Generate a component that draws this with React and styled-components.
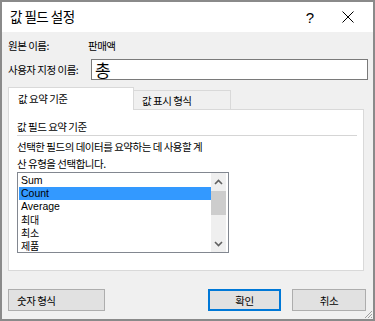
import React from 'react'
import styled, { createGlobalStyle, css } from 'styled-components'

const GlobalStyle = createGlobalStyle`
  * { box-sizing: border-box; }
  body {
    margin: 0;
    background: #fff;
    font-family: "Noto Sans CJK KR", "Noto Sans", sans-serif;
    color: #000;
  }
`

const items = ['Sum', 'Count', 'Average', '최대', '최소', '제품']

export default function App() {
  return <Window>
    <GlobalStyle/>
    <TitleBar>
      <Title>값 필드 설정</Title>
      <TitleButton>?</TitleButton>
      <TitleButton close>
        <svg width="12" height="12" viewBox="0 0 12 12">
          <path d="M0.5 0.5 L11.5 11.5 M11.5 0.5 L0.5 11.5" stroke="#000" strokeWidth="1"/>
        </svg>
      </TitleButton>
    </TitleBar>
    <Body>
      <FieldRow>
        <Label width={80}>원본 이름:</Label>
        <Value>판매액</Value>
      </FieldRow>
      <FieldRow top={5}>
        <Label width={83}>사용자 지정 이름:</Label>
        <TextInput defaultValue="총"/>
      </FieldRow>
      <TabStrip>
        <Tab active>값 요약 기준</Tab>
        <Tab>값 표시 형식</Tab>
      </TabStrip>
      <Panel>
        <Heading>값 필드 요약 기준</Heading>
        <Separator/>
        <Description>선택한 필드의 데이터를 요약하는 데 사용할 계<br/>산 유형을 선택합니다.</Description>
        <ListBox>
          <ListItems>
            {items.map((item, i) => (
              <ListItem key={item} selected={i === 1} latin={/^[A-Za-z]/.test(item)}>{item}</ListItem>
            ))}
          </ListItems>
          <ScrollBar>
            <ScrollArrow>
              <svg width="9" height="6" viewBox="0 0 9 6">
                <path d="M1 5 L4.5 1.5 L8 5" stroke="#606060" strokeWidth="1.6" fill="none"/>
              </svg>
            </ScrollArrow>
            <Thumb/>
            <ScrollTrack/>
            <ScrollArrow>
              <svg width="9" height="6" viewBox="0 0 9 6">
                <path d="M1 1 L4.5 4.5 L8 1" stroke="#606060" strokeWidth="1.6" fill="none"/>
              </svg>
            </ScrollArrow>
          </ScrollBar>
        </ListBox>
      </Panel>
      <ButtonRow>
        <Button width={97} left>숫자 형식</Button>
        <Spacer/>
        <Button width={73} primary>확인</Button>
        <Button width={74}>취소</Button>
      </ButtonRow>
    </Body>
    <Grip>
      <svg width="10" height="10" viewBox="0 0 10 10">
        <path d="M9 2 L2 9 M9 5 L5 9 M9 8 L8 9" stroke="#a0a0a0" strokeWidth="1"/>
      </svg>
    </Grip>
  </Window>
}

const Window = styled.div`
  position: relative;
  width: 375px;
  height: 321px;
  border: 2px solid #8a8a8a;
  background: #f0f0f0;
  display: flex;
  flex-direction: column;
  overflow: hidden;
`
const TitleBar = styled.div`
  height: 30px;
  background: #fff;
  display: flex;
  align-items: center;
  padding-left: 8px;
`
const Title = styled.div`
  flex: 1;
  font-size: 13.5px;
  letter-spacing: -0.5px;
  padding-bottom: 2px;
`
const TitleButton = styled.div`
  width: ${({ close }) => close ? '44px' : '38px'};
  height: 30px;
  display: flex;
  align-items: center;
  justify-content: center;
  font-family: "Liberation Sans", sans-serif;
  font-size: 15px;
  ${({ close }) => close && css`padding-right: 6px;`}
`
const Body = styled.div`
  flex: 1;
  padding: 4px 5px 0 6px;
  display: flex;
  flex-direction: column;
  font-size: 10.5px;
  letter-spacing: -0.5px;
`
const FieldRow = styled.div`
  display: flex;
  align-items: center;
  height: ${({ top }) => top ? '21px' : '18px'};
  margin-top: ${({ top }) => top || 0}px;
`
const Label = styled.div`
  width: ${({ width }) => width}px;
  flex-shrink: 0;
  white-space: nowrap;
`
const Value = styled.div``
const TextInput = styled.input`
  flex: 1;
  height: 21px;
  border: 1px solid #7a7a7a;
  background: #fff;
  font-family: "Noto Sans CJK KR", sans-serif;
  font-size: 17px;
  padding: 0 3px;
  margin: 0;
  outline: none;
  line-height: 19px;
`
const TabStrip = styled.div`
  display: flex;
  align-items: flex-end;
  height: 22px;
  margin-top: 7px;
  position: relative;
  z-index: 1;
`
const Tab = styled.div`
  display: flex;
  align-items: center;
  border: 1px solid #d9d9d9;
  border-bottom: none;
  white-space: nowrap;
  ${({ active }) => active ? css`
    width: 126px;
    height: 23px;
    margin-bottom: -1px;
    background: #fff;
    padding: 0 0 1px 9px;
  ` : css`
    width: 97px;
    height: 19px;
    background: #f0f0f0;
    border-left: none;
    padding-left: 8px;
  `}
`
const Panel = styled.div`
  width: 356px;
  height: 162px;
  background: #fff;
  border: 1px solid #d9d9d9;
  padding: 8px 6px 0 8px;
  display: flex;
  flex-direction: column;
`
const Heading = styled.div`
  line-height: 17px;
`
const Separator = styled.div`
  height: 1px;
  background: #d5d5d5;
`
const Description = styled.div`
  margin-top: 2px;
  line-height: 17px;
`
const ListBox = styled.div`
  width: 212px;
  height: 81px;
  border: 1px solid #828790;
  display: flex;
  padding: 1px 2px 0 1px;
`
const ListItems = styled.div`
  flex: 1;
  display: flex;
  flex-direction: column;
`
const ListItem = styled.div`
  height: 13px;
  line-height: 13px;
  padding-left: 2px;
  overflow: hidden;
  font-size: ${({ latin }) => latin ? '10.5px' : '10px'};
  font-family: ${({ latin }) => latin ? '"Liberation Sans", sans-serif' : '"Noto Sans CJK KR", sans-serif'};
  letter-spacing: ${({ latin }) => latin ? '0' : '-0.3px'};
  background: ${({ selected }) => selected ? '#3399ff' : 'transparent'};
`
const ScrollBar = styled.div`
  width: 15px;
  margin-top: -1px;
  background: #efefef;
  display: flex;
  flex-direction: column;
`
const ScrollArrow = styled.div`
  height: 17px;
  display: flex;
  align-items: center;
  justify-content: center;
`
const Thumb = styled.div`
  height: 24px;
  margin: 1px 0;
  background: #cdcdcd;
`
const ScrollTrack = styled.div`
  flex: 1;
`
const ButtonRow = styled.div`
  display: flex;
  margin-top: 18px;
  gap: 11px;
  padding-right: 2px;
`
const Spacer = styled.div`
  flex: 1;
`
const Button = styled.div`
  width: ${({ width }) => width}px;
  height: 22px;
  background: #e1e1e1;
  border: ${({ primary }) => primary ? '2px solid #0078d7' : '1px solid #adadad'};
  display: flex;
  align-items: center;
  justify-content: ${({ left }) => left ? 'flex-start' : 'center'};
  padding-left: ${({ left }) => left ? '8px' : '0'};
`
const Grip = styled.div`
  position: absolute;
  right: 0;
  bottom: 0;
  width: 10px;
  height: 10px;
  display: flex;
`
